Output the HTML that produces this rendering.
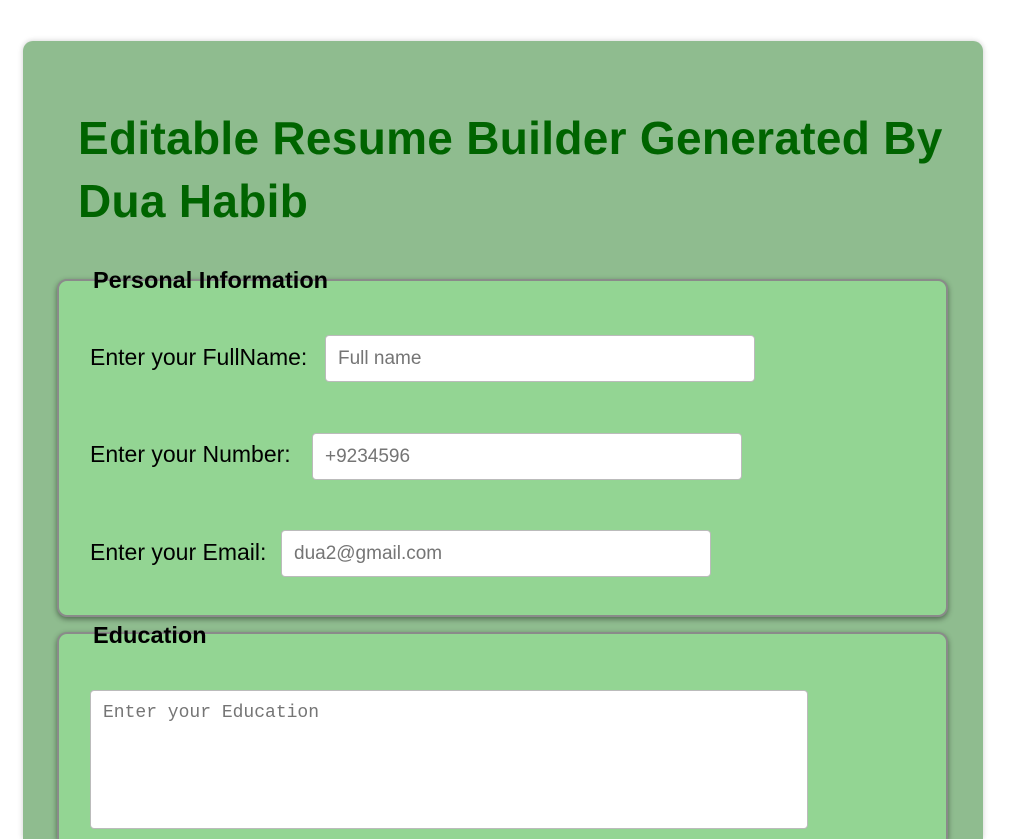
<!DOCTYPE html>
<html><head><style>
html,body{margin:0;height:839px;overflow:hidden}
body{background:#fff;width:1032px;position:relative;font-family:"Liberation Sans",sans-serif}
.c{position:absolute;left:23px;top:41px;width:960px;height:798px;background:#8fbc8f;border-radius:10px 10px 0 0;box-shadow:0 0 6px rgba(0,0,0,.2)}
h1{position:absolute;left:78px;top:107px;margin:0;font-size:46px;line-height:63px;color:#006400;font-weight:bold;width:900px;letter-spacing:0.3px;white-space:nowrap}
.fs{position:absolute;left:57px;width:887px;background:#93d593;border:2px solid #8a8a8a;border-radius:10px;box-shadow:0 2px 6px rgba(0,0,0,.45)}
.lg{position:absolute;font-weight:bold;font-size:23.5px;color:#000;left:93px}
.lb{position:absolute;left:90px;font-size:23px;color:#000}
.in{position:absolute;height:47px;width:430px;background:#fff;border:1px solid #bbb;border-radius:4px;font-size:19px;color:#757575;line-height:45px;padding-left:12px;box-sizing:border-box}
.ta{position:absolute;left:90px;top:690px;width:718px;height:139px;background:#fff;border:1px solid #bbb;border-radius:4px;box-sizing:border-box;font-family:"Liberation Mono",monospace;font-size:18px;color:#757575;padding:12px}
</style></head><body>
<div class="c"></div>
<h1>Editable Resume Builder Generated By<br>Dua Habib</h1>
<div class="fs" style="top:279px;height:334px"></div>
<div class="lg" style="top:267px">Personal Information</div>
<div class="lb" style="top:344px">Enter your FullName:</div>
<div class="in" style="left:325px;top:335px">Full name</div>
<div class="lb" style="top:441px">Enter your Number:</div>
<div class="in" style="left:312px;top:433px">+9234596</div>
<div class="lb" style="top:539px">Enter your Email:</div>
<div class="in" style="left:281px;top:530px">dua2@gmail.com</div>
<div class="fs" style="top:632px;height:205px;border-bottom:none;border-radius:10px 10px 0 0"></div>
<div class="lg" style="top:622px">Education</div>
<div class="ta">Enter your Education</div>
</body></html>
